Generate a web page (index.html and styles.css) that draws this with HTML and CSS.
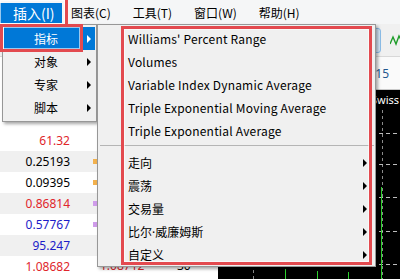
FILE: index.html
```html
<!DOCTYPE html>
<html>
<head>
<meta charset="utf-8">
<link rel="stylesheet" href="styles.css">
</head>
<body>
<div class="app">
  <div class="menubar">
    <span class="mb-item active">插入(I)</span>
    <span class="mb-item">图表(C)</span>
    <span class="mb-item">工具(T)</span>
    <span class="mb-item">窗口(W)</span>
    <span class="mb-item">帮助(H)</span>
  </div>
  <div class="toolbar">
    <span class="tb-btn"></span>
    <svg class="tb-icon" width="16" height="14" viewBox="0 0 16 14"><polyline points="0,11 3,4 6,11 9,3 12,9 16,5" fill="none" stroke="#1f9d2a" stroke-width="1.4"/></svg>
  </div>
  <div class="workspace">
    <div class="watch">
      <div class="watch-head"></div>
      <div class="row"><span class="num red">61.32</span><span class="mk"></span></div>
      <div class="row alt"><span class="num">0.25193</span><span class="mk orange"></span></div>
      <div class="row"><span class="num">0.09395</span><span class="mk orange"></span></div>
      <div class="row alt"><span class="num red">0.86814</span><span class="mk purple"></span></div>
      <div class="row"><span class="num blue">0.57767</span><span class="mk purple"></span></div>
      <div class="row alt"><span class="num blue">95.247</span><span class="mk"></span></div>
      <div class="row last"><span class="num red">1.08682</span><span class="mk"></span><span class="bid red">1.08712</span><span class="spr">30</span></div>
    </div>
    <div class="chartwin">
      <div class="chart-tab"><span class="tab-text">GBPUSD,M15</span></div>
      <div class="chart">
        <svg class="chart-svg" width="182" height="189" viewBox="0 0 182 189">
          <g stroke="#8a8a8a" stroke-width="1" stroke-dasharray="3,3">
            <line x1="35.5" y1="0" x2="35.5" y2="189"/>
            <line x1="164.5" y1="20" x2="164.5" y2="189"/>
          </g>
          <g stroke="#bdbdbd" stroke-width="1" stroke-dasharray="4,3">
            <line x1="0" y1="43.5" x2="182" y2="43.5"/>
            <line x1="0" y1="74.5" x2="182" y2="74.5"/>
            <line x1="0" y1="107.5" x2="182" y2="107.5"/>
            <line x1="0" y1="141.5" x2="182" y2="141.5"/>
            <line x1="0" y1="174.5" x2="182" y2="174.5"/>
          </g>
          <g stroke="#2ed12e" stroke-width="1">
            <line x1="67.5" y1="179" x2="67.5" y2="189"/>
            <line x1="99.5" y1="181" x2="99.5" y2="189"/>
            <line x1="130.5" y1="182" x2="130.5" y2="189"/>
            <line x1="163.5" y1="97" x2="163.5" y2="189"/>
          </g>
        </svg>
        <span class="chart-title">Swiss Franc vs US Dollar</span>
      </div>
    </div>
  </div>

  <div class="menu dropdown">
    <div class="mi hl"><span class="mi-label">指标</span><span class="arrow"></span></div>
    <div class="mi"><span class="mi-label">对象</span><span class="arrow"></span></div>
    <div class="mi"><span class="mi-label">专家</span><span class="arrow"></span></div>
    <div class="mi"><span class="mi-label">脚本</span><span class="arrow"></span></div>
  </div>

  <div class="menu submenu">
    <div class="si latin"><span class="si-label">Williams' Percent Range</span></div>
    <div class="si latin"><span class="si-label">Volumes</span></div>
    <div class="si latin"><span class="si-label">Variable Index Dynamic Average</span></div>
    <div class="si latin"><span class="si-label">Triple Exponential Moving Average</span></div>
    <div class="si latin"><span class="si-label">Triple Exponential Average</span></div>
    <div class="sep"></div>
    <div class="si"><span class="si-label">走向</span><span class="arrow"></span></div>
    <div class="si"><span class="si-label">震荡</span><span class="arrow"></span></div>
    <div class="si"><span class="si-label">交易量</span><span class="arrow"></span></div>
    <div class="si"><span class="si-label">比尔<span class="nd">·</span>威廉姆斯</span><span class="arrow"></span></div>
    <div class="si"><span class="si-label">自定义</span><span class="arrow"></span></div>
  </div>

  <div class="mark mark-insert"></div>
  <div class="mark mark-ind"></div>
  <div class="mark mark-sub"></div>
</div>
</body>
</html>
```

FILE: styles.css
```css
* { box-sizing: border-box; }
html, body { margin: 0; padding: 0; }
body {
  width: 400px;
  height: 279px;
  overflow: hidden;
  background: #ffffff;
  font-family: "Noto Sans CJK SC", "Noto Sans", sans-serif;
  font-size: 12px;
  color: #000;
}
.app {
  position: relative;
  width: 400px;
  height: 279px;
  overflow: hidden;
}

/* menubar */
.menubar {
  height: 24px;
  padding-top: 3px;
  display: flex;
  background: #f5f6f7;
}
.mb-item {
  height: 20px;
  line-height: 20px;
  padding: 0 11px;
  white-space: nowrap;
}
.mb-item.active {
  background: #0078d7;
  color: #fff;
  font-size: 14px;
  padding: 0 5px 0 13px;
  width: 62px;
}
.mb-item:nth-child(2) { padding-left: 9px; }

/* toolbar */
.toolbar {
  height: 33px;
  display: flex;
  align-items: center;
  padding-left: 360px;
  background: #f0f0f0;
  border-bottom: 1px solid #d8d8d8;
  overflow: hidden;
}
.tb-btn {
  width: 21px;
  height: 25px;
  flex: none;
  background: #d6e9fa;
  border: 1px solid #8cbde8;
  border-radius: 3px;
}
.tb-icon { flex: none; margin-left: 9px; }

/* workspace */
.workspace {
  display: flex;
  height: 222px;
}
.watch {
  width: 218px;
  flex: none;
  background: #fff;
}
.watch-head { height: 73px; }
.row {
  height: 21px;
  display: flex;
  align-items: center;
  font-family: "Noto Sans", sans-serif;
  font-size: 12px;
  white-space: nowrap;
}
.row.alt { background: #f0f0f0; }
.num { width: 70px; text-align: right; }
.mk { width: 5px; height: 5px; margin-left: 23px; flex: none; }
.mk.orange { background: #f2b14e; }
.mk.purple { background: #cf9cea; }
.bid { width: 77px; margin-left: 2px; padding-bottom: 3px; }
.spr { width: 30px; padding-bottom: 3px; }
.red { color: #e0262b; }
.blue { color: #1c1cc8; }

.chartwin {
  flex: 1;
  display: flex;
  flex-direction: column;
}
.chart-tab {
  height: 33px;
  display: flex;
  align-items: center;
  justify-content: flex-end;
  padding-right: 11px;
  background: #fafafa;
  border-bottom: 1px solid #c9c9c9;
}
.tab-text {
  font-family: "Noto Sans", sans-serif;
  font-size: 12px;
  color: #23588f;
  white-space: nowrap;
}
.chart {
  flex: 1;
  background: #000;
  position: relative;
  overflow: hidden;
}
.chart-svg { display: block; }
.chart-title {
  position: absolute;
  left: 153px;
  top: 2px;
  color: #fff;
  font-family: "Noto Sans", sans-serif;
  font-size: 11px;
  white-space: nowrap;
}

/* menus */
.menu {
  position: absolute;
  background: #f0f0f0;
  border: 1px solid #979797;
  box-shadow: 2px 2px 3px rgba(0,0,0,0.35);
}
.dropdown {
  left: 2px;
  top: 24px;
  width: 95px;
  padding: 2px 1px;
}
.mi {
  height: 23px;
  display: flex;
  align-items: center;
  padding-left: 30px;
}
.mi-label { flex: 1; }
.arrow {
  width: 0;
  height: 0;
  border-left: 4px solid #000;
  border-top: 4px solid transparent;
  border-bottom: 4px solid transparent;
  margin-right: 4px;
}
.mi.hl { background: #0078d7; color: #fff; }
.mi.hl .arrow { border-left-color: #fff; }

.submenu {
  left: 97px;
  top: 24px;
  width: 279px;
  padding: 2px 1px 0;
}
.si {
  height: 23px;
  display: flex;
  align-items: center;
  padding-left: 29px;
  white-space: nowrap;
}
.si.latin { letter-spacing: 0.2px; }
.si-label { flex: 1; }
.nd { font-family: "Noto Sans", sans-serif; }
.si .arrow { margin-right: 7px; }
.sep {
  height: 1px;
  margin: 3px 0 5px 1px;
  background: #b5b5b5;
}

/* red annotation boxes */
.mark {
  position: absolute;
  border: 3px solid #e34a4f;
  box-shadow: inset 0 0 0 1px rgba(255,255,255,0.6);
}
.mark-insert { left: -3px; top: -3px; width: 71px; height: 30px; }
.mark-ind { left: 0; top: 24px; width: 83px; height: 28px; }
.mark-sub { left: 121px; top: 26px; width: 251px; height: 239px; }
```
